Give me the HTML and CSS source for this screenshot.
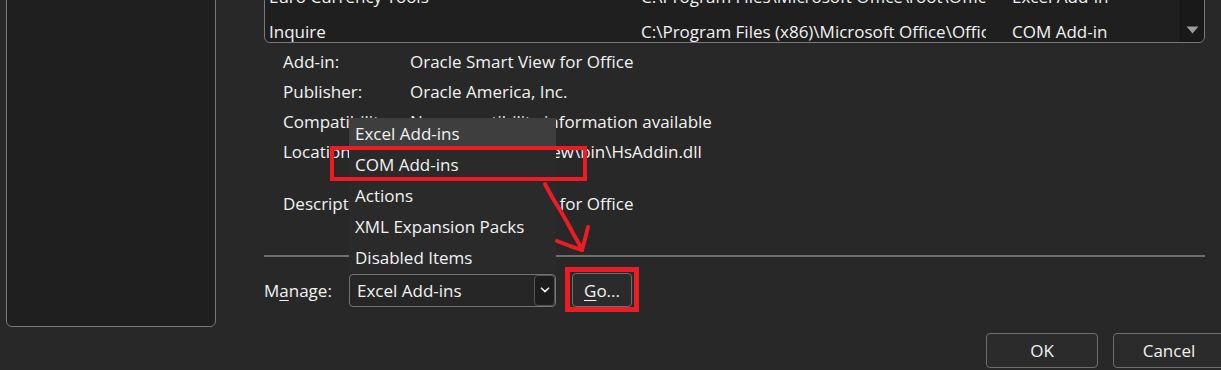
FILE: index.html
```html
<!DOCTYPE html>
<html lang="en">
<head>
<meta charset="utf-8">
<title>COM Add-ins</title>
<link rel="stylesheet" href="styles.css">
</head>
<body>
<div class="dialog">
  <div class="main">
    <aside class="side-panel"></aside>
    <section class="content">
      <div class="addin-list">
        <div class="rows">
          <div class="row">
            <span class="c-name">Euro Currency Tools</span>
            <span class="c-loc">C:\Program Files\Microsoft Office\root\Office16\Library\EUROTOOL.XLAM</span>
            <span class="c-type">Excel Add-in</span>
          </div>
          <div class="row">
            <span class="c-name">Inquire</span>
            <span class="c-loc">C:\Program Files (x86)\Microsoft Office\Office16\DCF\NativeShim.dll</span>
            <span class="c-type">COM Add-in</span>
          </div>
        </div>
        <div class="scrollbar">
          <svg class="scroll-arrow" width="13" height="8" viewBox="0 0 13 8"><path d="M0.5 0.5 H12.5 L6.5 7.5 Z" fill="#9b9b9b"/></svg>
        </div>
      </div>

      <div class="details">
        <span class="lbl">Add-in:</span><span class="val">Oracle Smart View for Office</span>
        <span class="lbl">Publisher:</span><span class="val">Oracle America, Inc.</span>
        <span class="lbl">Compatibility:</span><span class="val">No compatibility information available</span>
        <span class="lbl">Location:</span><span class="val">C:\Oracle\SmartView\bin\HsAddin.dll</span>
        <span class="lbl">Description:</span><span class="val">Oracle Smart View for Office</span>
      </div>

      <div class="separator"></div>

      <div class="manage-row">
        <span class="manage-label">M<u>a</u>nage:</span>
        <div class="combo">
          <span class="combo-text">Excel Add-ins</span>
          <span class="combo-btn">
            <svg width="10" height="6" viewBox="0 0 10 6"><path d="M1.5 1.2 L5 4.6 L8.5 1.2" fill="none" stroke="#f0f0f0" stroke-width="1.6" stroke-linecap="round" stroke-linejoin="round"/></svg>
          </span>
          <ul class="popup">
            <li class="item selected">Excel Add-ins</li>
            <li class="item">COM Add-ins</li>
            <li class="item">Actions</li>
            <li class="item">XML Expansion Packs</li>
            <li class="item">Disabled Items</li>
          </ul>
        </div>
        <button class="btn go"><u>G</u>o...</button>
      </div>
    </section>
  </div>

  <div class="footer">
    <button class="btn dlg-btn">OK</button>
    <button class="btn dlg-btn">Cancel</button>
  </div>

  <svg class="annotations" width="1221" height="370" viewBox="0 0 1221 370">
    <rect x="332" y="148" width="253" height="31" fill="none" stroke="#ed1c24" stroke-width="4"/>
    <rect x="567.5" y="269.5" width="69" height="40" fill="none" stroke="#ed1c24" stroke-width="5"/>
    <path d="M545 184 L552 197 L560 210 L567 222 L574 235 L582 249" fill="none" stroke="#ed1c24" stroke-width="4" stroke-linecap="round" stroke-linejoin="round"/>
    <path d="M557 241 L570 246 L582 250" fill="none" stroke="#ed1c24" stroke-width="4" stroke-linecap="round" stroke-linejoin="round"/>
    <path d="M588 227 L585 239 L582 250" fill="none" stroke="#ed1c24" stroke-width="4" stroke-linecap="round" stroke-linejoin="round"/>
  </svg>
</div>
</body>
</html>
```

FILE: styles.css
```css
html, body {
  margin: 0;
  padding: 0;
}

body {
  background: #282828;
  color: #f2f2f2;
  font-family: "Open Sans", "Noto Sans", sans-serif;
  font-size: 17px;
  width: 1221px;
  height: 370px;
  overflow: hidden;
}

.dialog {
  position: relative;
  display: flow-root;
  width: 1221px;
  height: 370px;
}

.main {
  display: flex;
  margin-top: -22px;
}

.side-panel {
  margin-left: 6px;
  width: 210px;
  height: 349px;
  box-sizing: border-box;
  background: #1f1f1f;
  border: 1px solid #7a7a7a;
  border-radius: 6px;
}

.content {
  margin-left: 48px;
  width: 941px;
  display: flex;
  flex-direction: column;
}

/* list of add-ins */
.addin-list {
  height: 65px;
  box-sizing: border-box;
  border: 1px solid #7a7a7a;
  border-radius: 6px;
  background: #1f1f1f;
  display: flex;
  overflow: hidden;
}

.rows {
  flex: 1;
  padding-left: 4px;
  overflow: hidden;
}

.row {
  display: flex;
  align-items: center;
  height: 35px;
  white-space: nowrap;
}

.c-name {
  width: 372px;
  flex: none;
}

.c-loc {
  width: 345px;
  margin-right: 26px;
  flex: none;
  overflow: hidden;
}

.c-type {
  flex: none;
}

.scrollbar {
  width: 25px;
  flex: none;
  background: #191919;
  border-radius: 0 0 5px 0;
  display: flex;
  flex-direction: column;
  justify-content: flex-end;
  align-items: center;
  padding-bottom: 8px;
  box-sizing: border-box;
}

.scroll-arrow {
  display: block;
  margin-left: 1px;
}

/* details grid */
.details {
  margin-top: 4px;
  padding-left: 19px;
  display: grid;
  grid-template-columns: 127px 1fr;
  grid-template-rows: 30px 30px 30px 30px 52px;
  align-items: end;
  line-height: 30px;
  white-space: nowrap;
}

.separator {
  height: 2px;
  background: #6e6e6e;
  margin-top: 36px;
}

/* manage row */
.manage-row {
  display: flex;
  align-items: center;
  height: 34px;
  margin-top: 16px;
}

.manage-label {
  width: 85px;
  flex: none;
}

.manage-label u,
.go u {
  text-underline-offset: 3px;
}

.combo {
  position: relative;
  width: 207px;
  height: 33px;
  box-sizing: border-box;
  border: 1px solid #737373;
  border-radius: 4px;
  display: flex;
  align-items: center;
  padding-left: 7px;
  background: #262626;
}

.combo-btn {
  margin-left: auto;
  width: 21px;
  height: 31px;
  box-sizing: border-box;
  background: #1c1c1c;
  border: 1px solid #565656;
  border-radius: 4px;
  display: flex;
  align-items: center;
  justify-content: center;
}

.combo-btn svg {
  display: block;
}

.popup {
  position: absolute;
  left: -1px;
  bottom: calc(100% + 2px);
  width: 207px;
  margin: 0;
  padding: 0;
  list-style: none;
  background: #2a2a2a;
  z-index: 5;
}

.item {
  height: 31px;
  line-height: 31px;
  padding-left: 6px;
  white-space: nowrap;
}

.item.selected {
  background: #3e3e3e;
}

.btn {
  font-family: inherit;
  font-size: 17px;
  color: #f2f2f2;
  background: #2b2b2b;
  border: 1px solid #6e6e6e;
  border-radius: 4px;
  padding: 0;
  box-sizing: border-box;
}

.go {
  margin-left: 16px;
  width: 60px;
  height: 34px;
}

.footer {
  display: flex;
  justify-content: flex-end;
  gap: 15px;
  margin-top: 6px;
  margin-right: -4px;
}

.dlg-btn {
  width: 112px;
  height: 35px;
  flex: none;
}

.annotations {
  position: absolute;
  left: 0;
  top: 0;
  pointer-events: none;
  z-index: 10;
}
```
